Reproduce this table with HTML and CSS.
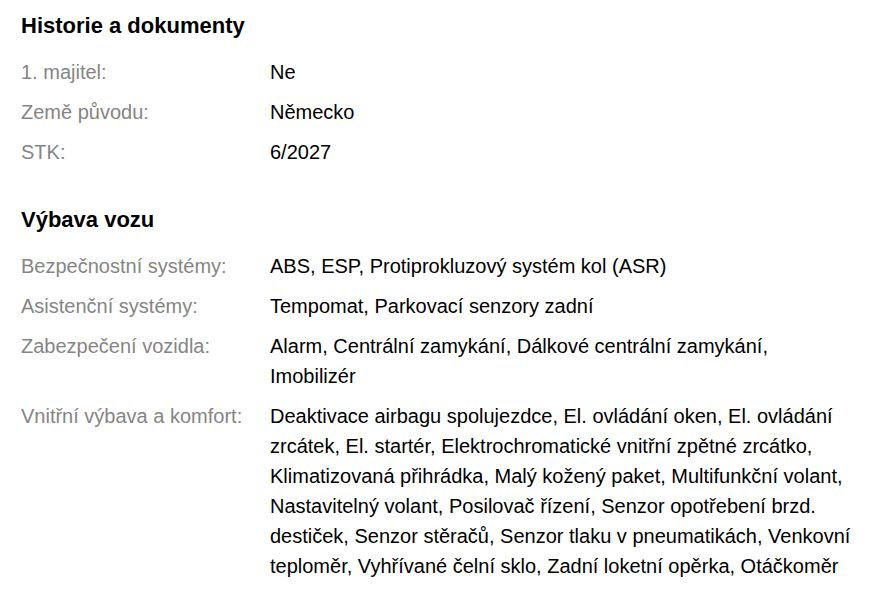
FILE: index.html
```html
<!DOCTYPE html>
<html lang="cs">
<head>
<meta charset="utf-8">
<link rel="stylesheet" href="styles.css">
</head>
<body>
<section class="section">
  <h2 class="title">Historie a dokumenty</h2>
  <dl class="params">
    <dt>1. majitel:</dt><dd>Ne</dd>
    <dt>Země původu:</dt><dd>Německo</dd>
    <dt>STK:</dt><dd>6/2027</dd>
  </dl>
</section>
<section class="section">
  <h2 class="title">Výbava vozu</h2>
  <dl class="params">
    <dt>Bezpečnostní systémy:</dt><dd>ABS, ESP, Protiprokluzový systém kol (ASR)</dd>
    <dt>Asistenční systémy:</dt><dd>Tempomat, Parkovací senzory zadní</dd>
    <dt>Zabezpečení vozidla:</dt><dd>Alarm, Centrální zamykání, Dálkové centrální zamykání, Imobilizér</dd>
    <dt>Vnitřní výbava a komfort:</dt><dd>Deaktivace airbagu spolujezdce, El. ovládání oken, El. ovládání zrcátek, El. startér, Elektrochromatické vnitřní zpětné zrcátko, Klimatizovaná přihrádka, Malý kožený paket, Multifunkční volant, Nastavitelný volant, Posilovač řízení, Senzor opotřebení brzd. destiček, Senzor stěračů, Senzor tlaku v pneumatikách, Venkovní teploměr, Vyhřívané čelní sklo, Zadní loketní opěrka, Otáčkoměr</dd>
  </dl>
</section>
</body>
</html>
```
FILE: styles.css
```css
html, body {
  margin: 0;
  background: #fff;
}
body {
  padding: 13px 17px 0 21px;
  font-family: "Liberation Sans", Arial, sans-serif;
  color: #000;
}
.section + .section {
  margin-top: 35px;
}
.title {
  margin: 0 0 13px 0;
  font-size: 22px;
  line-height: 26px;
  font-weight: bold;
}
.params {
  margin: 0;
  display: grid;
  grid-template-columns: 249px 1fr;
  font-size: 20px;
  line-height: 30px;
}
.params dt,
.params dd {
  margin: 0;
  padding: 5px 0;
}
.params dt {
  color: #858585;
}
```
